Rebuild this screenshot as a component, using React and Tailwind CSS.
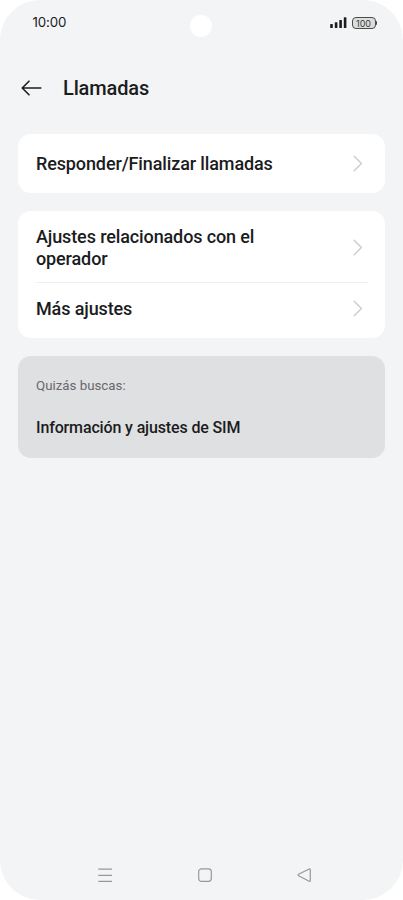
function SignalIcon() {
  return (
    <svg width="17" height="12" viewBox="0 0 17 12" fill="#1c1c1e">
      <rect x="0.2" y="7" width="2.6" height="4" rx="0.6" />
      <rect x="4.8" y="5.2" width="2.6" height="5.8" rx="0.6" />
      <rect x="9.3" y="2.9" width="2.6" height="8.1" rx="0.6" />
      <rect x="13.8" y="0.2" width="2.6" height="10.8" rx="0.6" />
    </svg>
  );
}

function Battery({ level }) {
  return (
    <div className="flex items-center">
      <div className="flex h-[12px] w-[24px] items-center justify-center rounded-[4px] border border-[#4a4b4c] bg-[#dcdddd] font-[Inter,sans-serif] text-[9px] leading-none text-[#3a3b3c]">
        {level}
      </div>
      <div className="h-[4px] w-[1.5px] rounded-r-[1px] bg-[#4a4b4c]" />
    </div>
  );
}

function StatusBar() {
  return (
    <div className="relative flex h-[46px] items-center justify-between pr-[26px] pl-[32.5px]">
      <span className="font-[Inter,sans-serif] text-[13.3px] tracking-[-0.1px] text-[#1b1c1d]">
        10:00
      </span>
      {/* Front camera */}
      <span className="absolute top-[14.5px] left-[190px] size-[22px] rounded-full bg-white" />
      <div className="flex items-center gap-[5px]">
        <SignalIcon />
        <Battery level={100} />
      </div>
    </div>
  );
}

function Header({ title }) {
  return (
    <header className="flex h-[84px] items-center gap-[20px] pl-[21px]">
      <svg
        width="22"
        height="18"
        viewBox="0 0 22 18"
        fill="none"
        stroke="#1d1e1f"
        strokeWidth="1.6"
        strokeLinecap="round"
        strokeLinejoin="round"
      >
        <path d="M19.8 9H1.4M8 2.2L1.2 9L8 15.8" />
      </svg>
      <h1 className="text-[20px] font-medium tracking-[-0.15px] text-[#1b1c1d]">{title}</h1>
    </header>
  );
}

function Chevron() {
  return (
    <svg
      className="shrink-0"
      width="10"
      height="17"
      viewBox="0 0 10 17"
      fill="none"
      stroke="#cbcccd"
      strokeWidth="1.4"
      strokeLinecap="round"
      strokeLinejoin="round"
    >
      <path d="M1.2 1.3L8.4 8.5L1.2 15.7" />
    </svg>
  );
}

function Row({ label, className }) {
  return (
    <button
      className={`flex w-full items-center justify-between text-left text-[18px] leading-[22.5px] font-medium tracking-[-0.12px] text-[#1b1c1d] ${className}`}
    >
      <span className="w-[250px] pt-[2px]">{label}</span>
      <Chevron />
    </button>
  );
}

function NavBar() {
  return (
    <nav className="mt-auto flex h-[50px] items-center justify-between pr-[91px] pl-[98px] text-[#97989a]">
      <svg width="14" height="16" viewBox="0 0 14 16" stroke="currentColor" strokeWidth="1.2">
        <path d="M0.3 2.2H14M0.3 8.3H14M0.3 14.4H14" />
      </svg>
      <svg width="14" height="14" viewBox="0 0 14 14" fill="none" stroke="currentColor" strokeWidth="1.2">
        <rect x="0.7" y="0.8" width="12.6" height="12.6" rx="2.8" />
      </svg>
      <svg
        width="15"
        height="14"
        viewBox="0 0 15 14"
        fill="none"
        stroke="currentColor"
        strokeWidth="1.2"
        strokeLinejoin="round"
      >
        <path d="M12.2 1L1.6 6.3Q0.6 7 1.6 7.8L12.2 13.2Q13.3 13.6 13.3 12.4V1.8Q13.3 0.5 12.2 1Z" />
      </svg>
    </nav>
  );
}

export default function App() {
  return (
    <div className="h-[900px] w-[403px] bg-white font-[Roboto,sans-serif]">
      <div className="flex h-full flex-col overflow-hidden rounded-[40px] bg-[#f2f4f6]">
        <StatusBar />
        <Header title="Llamadas" />

        <main className="flex flex-col gap-[18px] pt-[4px] pr-[18px] pl-[18px]">
          <section className="rounded-[13px] bg-white pr-[22px] pl-[18px]">
            <Row label="Responder/Finalizar llamadas" className="h-[58.5px]" />
          </section>

          <section className="rounded-[13px] bg-white pr-[17px] pl-[18px]">
            <Row
              label="Ajustes relacionados con el operador"
              className="h-[71px] pt-[2px] pr-[5px]"
            />
            <div className="h-px bg-[#eeeff0]" />
            <Row label="Más ajustes" className="h-[55px] pr-[5px] pb-[3px]" />
          </section>

          <section className="h-[102px] rounded-[13px] bg-[#dfe0e2] px-[18px] pt-[20px]">
            <p className="text-[13.3px] leading-[20px] text-[#67686a]">Quizás buscas:</p>
            <a className="mt-[21px] block text-[16px] leading-[22px] font-medium tracking-[-0.14px] text-[#1b1c1d]">
              Información y ajustes de SIM
            </a>
          </section>
        </main>

        <NavBar />
      </div>
    </div>
  );
}
